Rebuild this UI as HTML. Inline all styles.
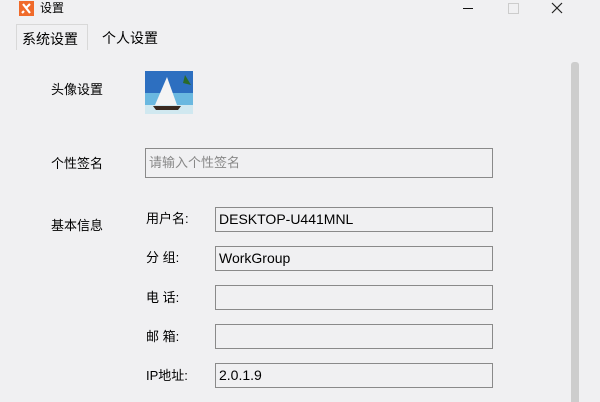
<!DOCTYPE html>
<html><head><meta charset="utf-8"><style>
body{margin:0;width:600px;height:400px;background:#f0f0f2;position:relative;overflow:hidden;font-family:"Liberation Sans","Noto Sans CJK SC",sans-serif;font-size:13px;color:#000}
.a{position:absolute}
.box{position:absolute;border:1px solid #8a8a8a;box-sizing:border-box;background:#f0f0f2;font-size:14px;line-height:22px;padding-left:3px}
.lbl{position:absolute;font-size:13px;line-height:16px}
</style></head><body>
<div class="a" style="left:19px;top:1px;width:15px;height:15px;background:#f06a2a"></div>
<svg class="a" style="left:19px;top:1px" width="15" height="15"><path d="M4 3L11 12M11 3L7 7M5 10L3 12" stroke="#fff" stroke-width="2.2"/></svg>
<div class="a" style="left:40px;top:0px;font-size:12px;line-height:16px">设置</div>
<div class="a" style="left:463px;top:8px;width:10px;height:1px;background:#111"></div>
<div class="a" style="left:508px;top:3px;width:9px;height:9px;border:1px solid #ccc"></div>
<svg class="a" style="left:551px;top:2px" width="12" height="12"><path d="M1 1L11 11M11 1L1 11" stroke="#222" stroke-width="1.2"/></svg>
<div class="a" style="left:16px;top:24px;width:72px;height:26px;border:1px solid #d8d8d8;border-bottom:none;box-sizing:border-box;background:#f0f0f2"></div>
<div class="a" style="left:22px;top:31px;font-size:14px;line-height:16px">系统设置</div>
<div class="a" style="left:102px;top:30px;font-size:14px;line-height:16px">个人设置</div>
<div class="a" style="left:571px;top:62px;width:8px;height:340px;background:#cdcdcd;border-radius:3px 3px 0 0"></div>
<div class="lbl" style="left:51px;top:82px">头像设置</div>
<svg class="a" style="left:145px;top:71px" width="48" height="43">
<rect width="48" height="43" fill="#2d6fc0"/><rect y="22" width="48" height="21" fill="#6ab8e0"/><rect y="34" width="48" height="9" fill="#d0e8f0"/>
<path d="M22 6L10 34L32 34Z" fill="#f4f4f4"/><path d="M8 35L36 35L33 39L11 39Z" fill="#3a2a20"/>
<path d="M40 4L46 14L38 12Z" fill="#2a6a2a"/></svg>
<div class="lbl" style="left:51px;top:156px">个性签名</div>
<div class="box" style="left:145px;top:148px;width:348px;height:30px;line-height:28px;color:#888;font-size:13px">请输入个性签名</div>
<div class="lbl" style="left:51px;top:218px">基本信息</div>
<div class="lbl" style="left:146px;top:211px">用户名:</div>
<div class="box" style="left:215px;top:207px;width:278px;height:25px">DESKTOP-U441MNL</div>
<div class="lbl" style="left:146px;top:250px">分 组:</div>
<div class="box" style="left:215px;top:246px;width:278px;height:25px">WorkGroup</div>
<div class="lbl" style="left:146px;top:290px">电 话:</div>
<div class="box" style="left:215px;top:285px;width:278px;height:25px"></div>
<div class="lbl" style="left:146px;top:329px">邮 箱:</div>
<div class="box" style="left:215px;top:324px;width:278px;height:25px"></div>
<div class="lbl" style="left:146px;top:368px">IP地址:</div>
<div class="box" style="left:215px;top:363px;width:278px;height:25px">2.0.1.9</div>
</body></html>
